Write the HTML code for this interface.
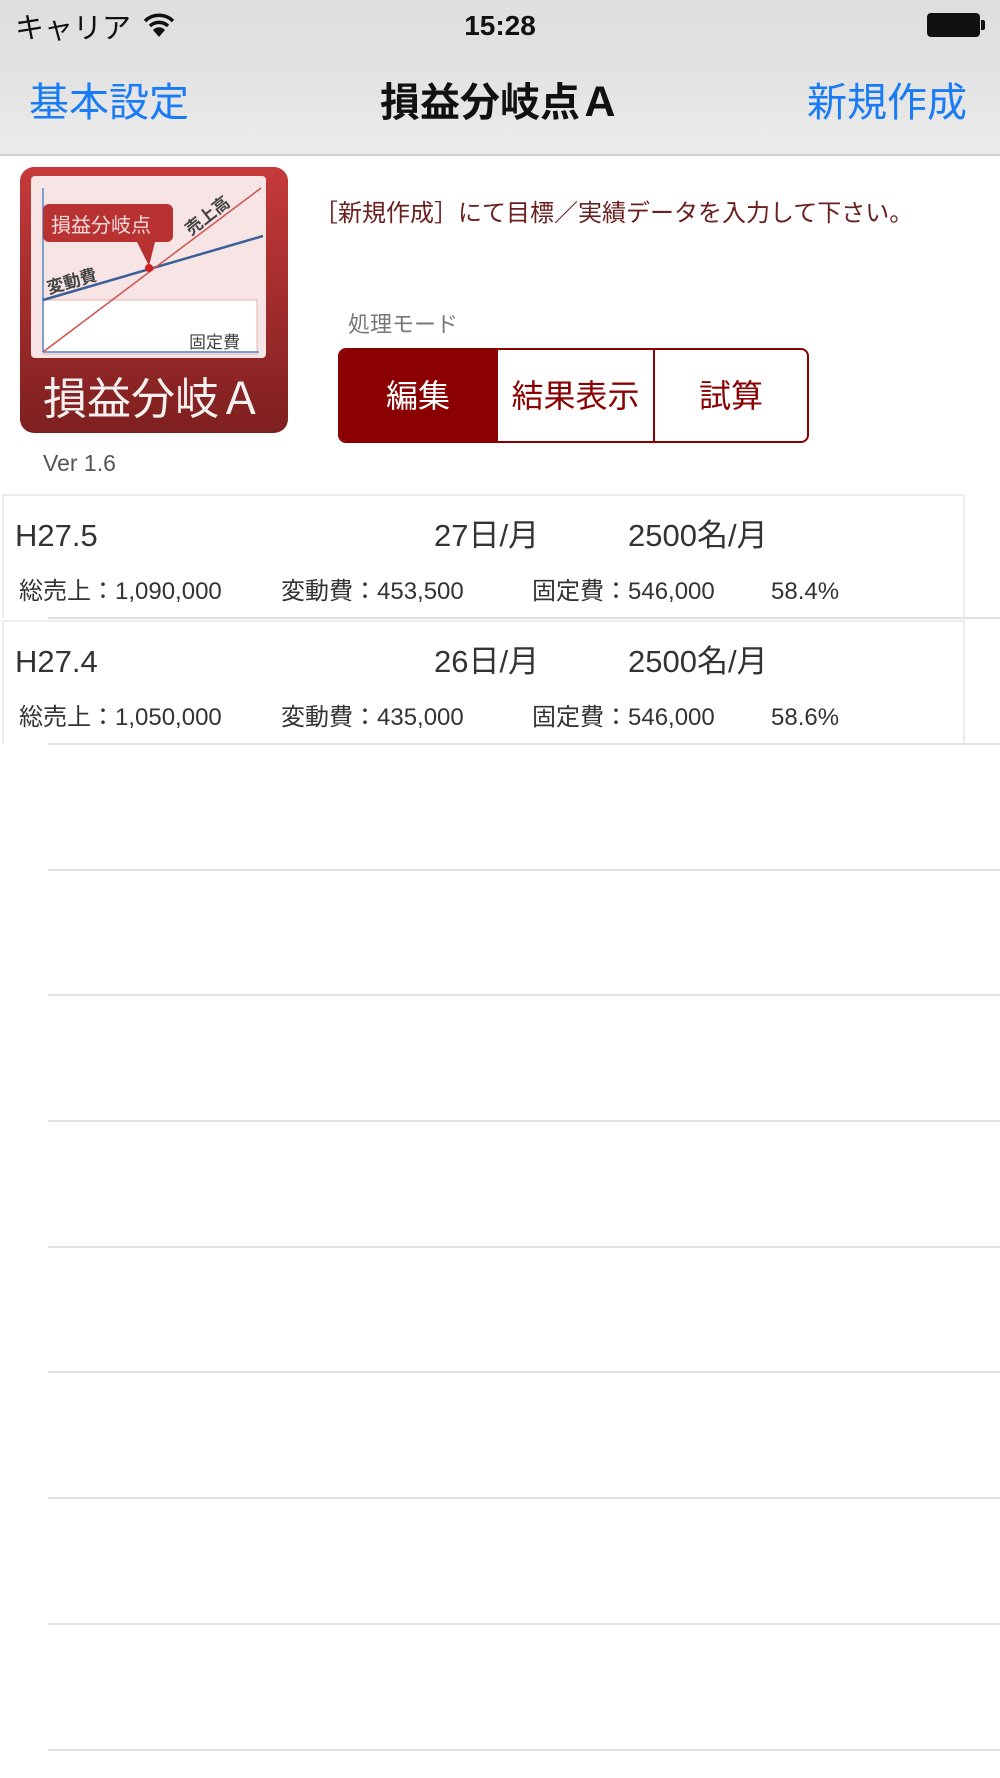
<!DOCTYPE html>
<html><head><meta charset="utf-8"><style>
*{margin:0;padding:0;box-sizing:border-box}
body{width:1000px;height:1778px;background:#fff;position:relative;overflow:hidden;font-family:"Liberation Sans","Noto Sans CJK JP",sans-serif;}
.a{position:absolute;white-space:nowrap;line-height:1}
.nav{position:absolute;left:0;top:0;width:1000px;height:156px;background:linear-gradient(#dedede,#e4e4e4 60%,#ececec);border-bottom:2px solid #cfcfcf}
.blue{color:#1a7cf5}
.seg{position:absolute;left:338px;top:348px;width:471px;height:95px;border:2px solid #8b0000;border-radius:8px;overflow:hidden;display:flex}
.seg div{display:flex;align-items:center;justify-content:center;font-size:32px;color:#8b0000;border-left:2px solid #8b0000;line-height:1}
.row{position:absolute;left:2px;width:963px;height:124px;border:2px solid #ececec;border-bottom:none}
.sep{position:absolute;left:48px;right:0;height:2px;background:#e2e2e2}
.r1{font-size:31px;color:#333}
.r2{font-size:24px;color:#333}
</style></head><body>
<div class="nav"></div>
<div class="a" style="left:15px;top:15px;font-size:29px;color:#111">キャリア</div>
<svg class="a" style="left:143px;top:12px" width="32" height="26" viewBox="0 0 32 26"><path d="M2 9 A20 20 0 0 1 30 9" stroke="#111" stroke-width="3.5" fill="none"/><path d="M7 14 A13 13 0 0 1 25 14" stroke="#111" stroke-width="3.5" fill="none"/><path d="M16 25 L10 18 A8 8 0 0 1 22 18 Z" fill="#111"/></svg>
<div class="a" style="left:0;width:1000px;text-align:center;top:12px;font-size:28px;font-weight:bold;color:#111">15:28</div>
<div class="a" style="left:927px;top:13px;width:53px;height:24px;border:2px solid #111;border-radius:4px;background:#111"></div>
<div class="a" style="left:981px;top:20px;width:4px;height:10px;background:#111;border-radius:0 2px 2px 0"></div>
<div class="a blue" style="left:29px;top:83px;font-size:40px">基本設定</div>
<div class="a" style="left:0;width:1000px;text-align:center;top:83px;font-size:40px;font-weight:bold;color:#111">損益分岐点Ａ</div>
<div class="a blue" style="left:807px;top:83px;font-size:40px">新規作成</div>

<svg class="a" style="left:19px;top:166px" width="270" height="268" viewBox="0 0 270 268">
<defs><linearGradient id="g" x1="0" y1="0" x2="0" y2="1"><stop offset="0" stop-color="#c63a3a"/><stop offset="1" stop-color="#7e1f1f"/></linearGradient></defs>
<rect x="1" y="1" width="268" height="266" rx="14" fill="url(#g)"/>
<rect x="12" y="10" width="235" height="182" rx="4" fill="#f7e4e4"/>
<rect x="24" y="134" width="214" height="54" fill="#fff" stroke="#e7b0b0"/>
<line x1="24" y1="22" x2="24" y2="186" stroke="#7c9fd0" stroke-width="2"/>
<line x1="24" y1="186" x2="240" y2="186" stroke="#7c9fd0" stroke-width="2"/>
<line x1="24" y1="134" x2="244" y2="70" stroke="#3a5f9a" stroke-width="2.5"/>
<line x1="24" y1="186" x2="242" y2="22" stroke="#d05050" stroke-width="1.5"/>
<circle cx="130" cy="102" r="4" fill="#d02020"/>
<path d="M30 38 h118 a6 6 0 0 1 6 6 v26 a6 6 0 0 1 -6 6 h-12 l-6 24 l-12 -24 h-88 a6 6 0 0 1 -6 -6 v-26 a6 6 0 0 1 6 -6z" fill="#b83232"/>
<text x="32" y="66" font-size="20" fill="#f4dcdc" font-family="Noto Sans CJK JP,sans-serif">損益分岐点</text>
<text x="170" y="182" font-size="17" fill="#444" font-family="Noto Sans CJK JP,sans-serif">固定費</text>
<text x="0" y="0" font-size="17" fill="#444" font-weight="bold" transform="translate(30 128) rotate(-16)" font-family="Noto Sans CJK JP,sans-serif">変動費</text>
<text x="0" y="0" font-size="17" fill="#444" font-weight="bold" transform="translate(172 70) rotate(-38)" font-family="Noto Sans CJK JP,sans-serif">売上高</text>
<text x="134" y="248" text-anchor="middle" font-size="44" fill="#f1f1f1" font-family="Noto Sans CJK JP,sans-serif">損益分岐Ａ</text>
</svg>
<div class="a" style="left:43px;top:452px;font-size:23px;color:#555">Ver 1.6</div>
<div class="a" style="left:314px;top:202px;font-size:24px;color:#6b2020">［新規作成］にて目標／実績データを入力して下さい。</div>
<div class="a" style="left:348px;top:314px;font-size:22px;color:#777">処理モード</div>
<div class="seg"><div style="width:156px;background:#8b0000;color:#fff;border-left:none">編集</div><div style="width:157px">結果表示</div><div style="flex:1">試算</div></div>

<div class="row" style="top:494px"></div>
<div class="sep" style="top:617px"></div>
<div class="a r1" style="left:15px;top:520px">H27.5</div>
<div class="a r1" style="left:434px;top:520px">27日/月</div>
<div class="a r1" style="left:628px;top:520px">2500名/月</div>
<div class="a r2" style="left:19px;top:580px">総売上：1,090,000</div>
<div class="a r2" style="left:281px;top:580px">変動費：453,500</div>
<div class="a r2" style="left:532px;top:580px">固定費：546,000</div>
<div class="a r2" style="left:771px;top:580px">58.4%</div>

<div class="row" style="top:620px"></div>
<div class="sep" style="top:743px"></div>
<div class="a r1" style="left:15px;top:646px">H27.4</div>
<div class="a r1" style="left:434px;top:646px">26日/月</div>
<div class="a r1" style="left:628px;top:646px">2500名/月</div>
<div class="a r2" style="left:19px;top:706px">総売上：1,050,000</div>
<div class="a r2" style="left:281px;top:706px">変動費：435,000</div>
<div class="a r2" style="left:532px;top:706px">固定費：546,000</div>
<div class="a r2" style="left:771px;top:706px">58.6%</div>

<div class="sep" style="top:869px"></div>
<div class="sep" style="top:994px"></div>
<div class="sep" style="top:1120px"></div>
<div class="sep" style="top:1246px"></div>
<div class="sep" style="top:1371px"></div>
<div class="sep" style="top:1497px"></div>
<div class="sep" style="top:1623px"></div>
<div class="sep" style="top:1749px"></div>
</body></html>
